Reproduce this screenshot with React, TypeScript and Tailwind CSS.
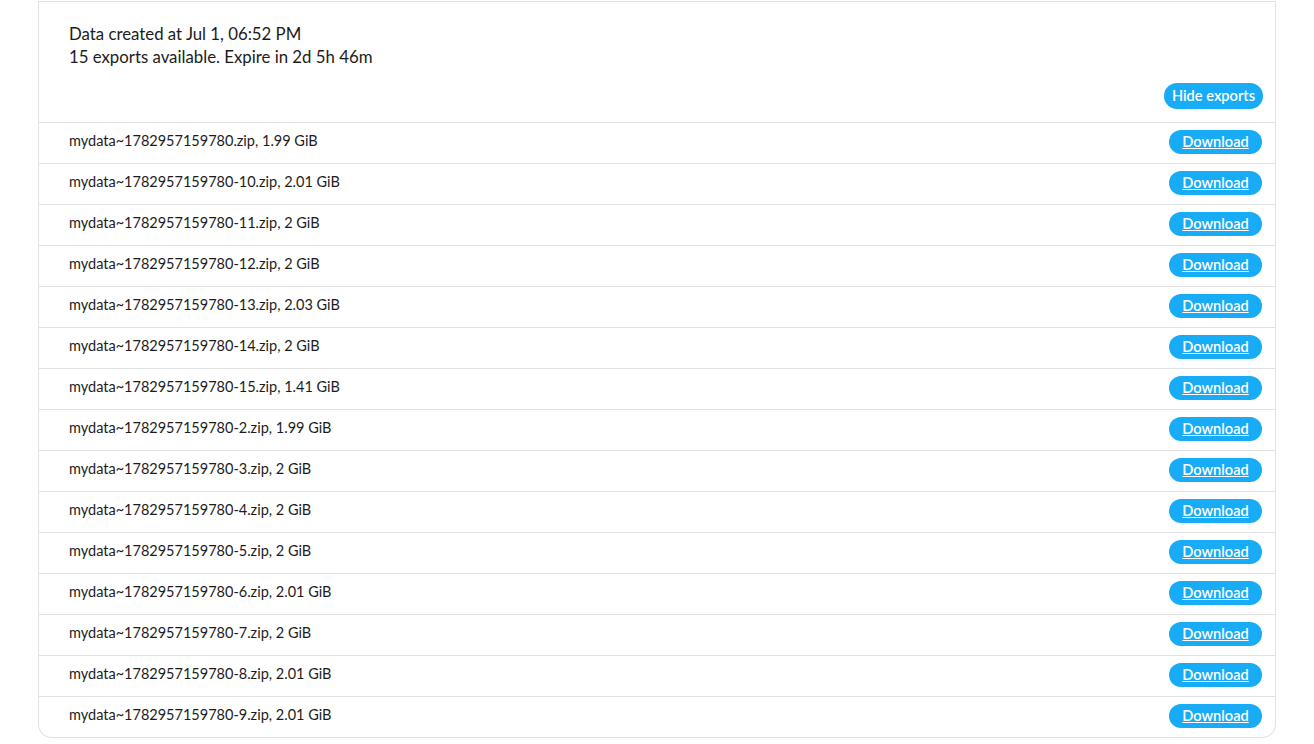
import React from "react";

const files: [string, string][] = [
  ["mydata~1782957159780.zip", "1.99 GiB"],
  ["mydata~1782957159780-10.zip", "2.01 GiB"],
  ["mydata~1782957159780-11.zip", "2 GiB"],
  ["mydata~1782957159780-12.zip", "2 GiB"],
  ["mydata~1782957159780-13.zip", "2.03 GiB"],
  ["mydata~1782957159780-14.zip", "2 GiB"],
  ["mydata~1782957159780-15.zip", "1.41 GiB"],
  ["mydata~1782957159780-2.zip", "1.99 GiB"],
  ["mydata~1782957159780-3.zip", "2 GiB"],
  ["mydata~1782957159780-4.zip", "2 GiB"],
  ["mydata~1782957159780-5.zip", "2 GiB"],
  ["mydata~1782957159780-6.zip", "2.01 GiB"],
  ["mydata~1782957159780-7.zip", "2 GiB"],
  ["mydata~1782957159780-8.zip", "2.01 GiB"],
  ["mydata~1782957159780-9.zip", "2.01 GiB"],
];

export default function App() {
  return (
    <div className="min-h-screen bg-white text-[#1c1c1c]" style={{ fontFamily: "Lato, 'Noto Sans', sans-serif" }}>
      <div className="mx-[38px] pt-px">
        <div className="border-x border-b border-[#e2e2e2] rounded-b-[14px]">
          <div className="border-t border-[#e2e2e2] pt-[20px] pb-[13px] pl-[30px] pr-[12px]">
            <div className="text-[16.8px] leading-[23px]">
              <div>Data created at Jul 1, 06:52 PM</div>
              <div>15 exports available. Expire in 2d 5h 46m</div>
            </div>
            <div className="flex justify-end mt-[15px]">
              <button className="h-[26px] px-[8px] rounded-full bg-[#18abf6] text-white text-[14.6px] font-semibold leading-none">
                Hide exports
              </button>
            </div>
          </div>
          {files.map(([name, size]) => (
            <div
              key={name}
              className="h-[41px] border-t border-[#e2e2e2] flex items-center justify-between pl-[30px] pr-[13px]"
            >
              <span className="text-[14.5px] pb-[4px]">
                {name}, {size}
              </span>
              <button className="h-[24px] w-[93px] mb-[2px] rounded-full bg-[#18abf6] text-white text-[14.6px] font-semibold underline leading-none">
                Download
              </button>
            </div>
          ))}
        </div>
      </div>
    </div>
  );
}
